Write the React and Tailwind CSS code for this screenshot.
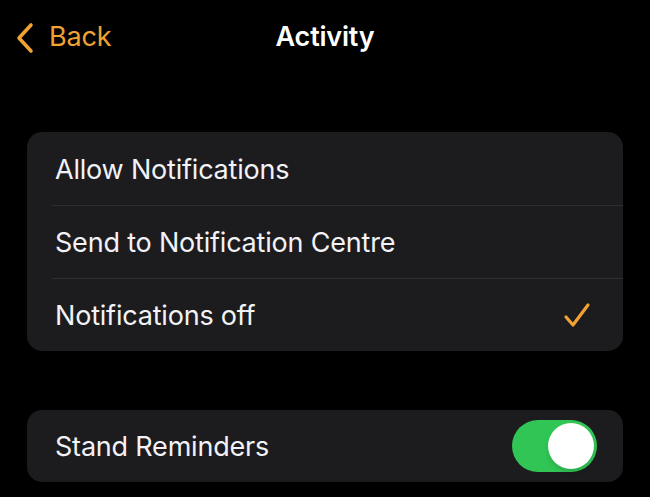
import React from "react";

const rows = ["Allow Notifications", "Send to Notification Centre", "Notifications off"];

const App = () => {
  return (
    <div
      className="w-[650px] h-[497px] bg-black text-[#f2f2f7] overflow-hidden"
      style={{ fontFamily: "Inter, 'Noto Sans', sans-serif" }}
    >
      <div className="relative h-[75px] flex items-center">
        <div className="flex items-center pl-[15px] text-[#f0a232]">
          <svg width="20" height="32" viewBox="0 0 20 32" fill="none">
            <path d="M16 3 L4 16 L16 29" stroke="#f0a232" strokeWidth="3.6" strokeLinecap="round" strokeLinejoin="round" />
          </svg>
          <span className="ml-[14px] text-[27px] tracking-[-0.2px]">Back</span>
        </div>
        <div className="absolute left-0 right-0 text-center text-[27px] font-semibold text-white pointer-events-none tracking-[-0.2px]">
          Activity
        </div>
      </div>

      <div className="mt-[57px] mx-[27px] bg-[#1c1c1e] rounded-[15px] overflow-hidden">
        {rows.map((label, i) => (
          <div key={label} className="flex">
            <div className="w-[25px]" />
            <div
              className={
                "flex-1 h-[73px] flex items-center justify-between pr-[32px] " +
                (i > 0 ? "border-t border-[#2e2e30]" : "")
              }
            >
              <span className="pl-[3px] pt-[3px] text-[27px] tracking-[-0.2px]">{label}</span>
              {i === 2 && (
                <svg width="28" height="26" viewBox="0 0 28 26" fill="none">
                  <path d="M3 15 L10 23 L25 3" stroke="#f0a232" strokeWidth="3.2" strokeLinecap="round" strokeLinejoin="round" />
                </svg>
              )}
            </div>
          </div>
        ))}
      </div>

      <div className="mt-[59px] mx-[27px] h-[72px] bg-[#1c1c1e] rounded-[15px] flex items-center justify-between pl-[28px] pr-[26px]">
        <span className="pt-[3px] text-[27px] tracking-[-0.2px]">Stand Reminders</span>
        <div className="w-[85px] h-[52px] rounded-full bg-[#30c555] flex items-center justify-end pr-[3px]">
          <div className="w-[46px] h-[46px] rounded-full bg-white shadow-md" />
        </div>
      </div>
    </div>
  );
};

export default App;
